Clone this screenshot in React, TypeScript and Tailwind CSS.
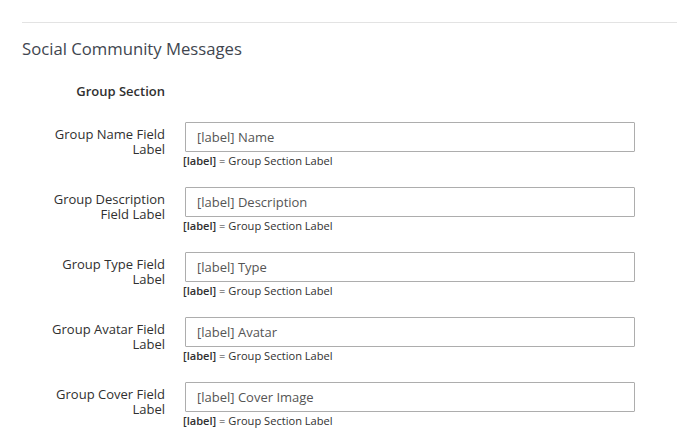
const fields = [
  { label: 'Group Name Field Label', value: '[label] Name' },
  { label: 'Group Description Field Label', value: '[label] Description' },
  { label: 'Group Type Field Label', value: '[label] Type' },
  { label: 'Group Avatar Field Label', value: '[label] Avatar' },
  { label: 'Group Cover Field Label', value: '[label] Cover Image' },
]

export default function App() {
  return (
    <div className="min-h-screen bg-white text-[#303030]" style={{ fontFamily: '"Open Sans", sans-serif' }}>
      <div className="pt-[22px] pl-[22px]">
        <div className="h-px bg-[#e3e3e3]" />
      </div>
      <h2 className="pl-[22px] mt-[15px] text-[16.7px] leading-[22px] text-[#41464f]">Social Community Messages</h2>
      <div className="mt-[23px] flex">
        <div className="w-[165px] text-right text-[13px] font-semibold leading-[16px]">Group Section</div>
      </div>
      <div className="mt-[23px] flex flex-col gap-[20px]">
        {fields.map(f => (
          <div key={f.label} className="flex">
            <label className="w-[165px] pl-[35px] pt-[5px] text-right text-[13px] leading-[15px]">{f.label}</label>
            <div className="ml-[20px] w-[450px]">
              <input
                readOnly
                value={f.value}
                className="block h-[30px] w-full rounded-[1px] border border-[#adadad] px-[11px] text-[13px] text-[#555] outline-none"
              />
              <p className="-ml-[2px] mt-[2px] text-[11.1px] leading-[13px]">
                <b className="font-semibold">[label]</b> = Group Section Label
              </p>
            </div>
          </div>
        ))}
      </div>
    </div>
  )
}
